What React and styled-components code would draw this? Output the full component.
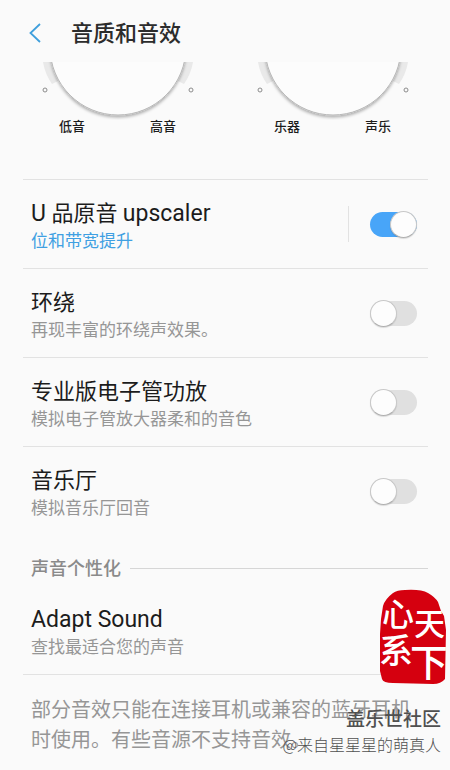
import React, { useState } from "react";
import styled, { createGlobalStyle } from "styled-components";

const GlobalStyle = createGlobalStyle`
* {
box-sizing: border-box;
}
body {
margin: 0;
background-color: #fafafa;
color: #1c1c1c;
font-family: Roboto, "Noto Sans CJK SC", sans-serif;
}
`

const Container = styled.div`
position: relative;
min-height: 100vh;
overflow: hidden;
`

const Header = styled.header`
display: flex;
align-items: center;
gap: 21px;
height: 62px;
padding: 4px 20px 0;
`

const BackButton = styled.button`
display: flex;
padding: 8px 9px;
background: none;
border: none;
cursor: pointer;
`

const Title = styled.h1`
margin: 0;
padding-top: 2px;
font-size: 22px;
line-height: 30px;
font-weight: 500;
color: #2c2c2c;
`

const Dials = styled.section`
display: flex;
padding: 0 10px 45px;
`

const DialBox = styled.div`
flex: 1;
display: flex;
flex-direction: column;
align-items: center;
`

const DialLabels = styled.div`
display: flex;
gap: 65px;
font-size: 13px;
line-height: 14px;
font-weight: 500;
`

const Content = styled.main`
margin: 0 22px 0 23px;
`

const List = styled.ul`
margin: 0;
padding: 0;
list-style: none;
border-top: ${(props) => (props.$topLine ? "1px solid #e2e2e2" : "none")};
`

const Row = styled.li`
position: relative;
display: flex;
align-items: center;
justify-content: space-between;
height: 89px;
padding: 5px 11px 0 8px;
border-bottom: ${(props) => (props.$last ? "none" : "1px solid #e2e2e2")};
`

const RowText = styled.label`
flex: 1;
display: flex;
flex-direction: column;
cursor: pointer;
`

const RowLink = styled.a`
flex: 1;
display: flex;
flex-direction: column;
color: inherit;
text-decoration: none;
`

const RowTitle = styled.span`
font-size: 22px;
line-height: 28px;
`

const Latin = styled.span`
font-size: 23px;
`

const RowDetail = styled.span`
font-size: 17px;
line-height: 26px;
color: ${(props) => (props.$active ? "#3fa0e2" : "#969696")};
`

const SwitchBox = styled.div`
display: flex;
align-items: center;
height: 36px;
margin-bottom: 5px;
padding-left: 21px;
border-left: 1px solid ${(props) => (props.$divided ? "#e2e2e2" : "transparent")};
`

const Switch = styled.input`
appearance: none;
display: flex;
align-items: center;
justify-content: ${(props) => (props.checked ? "flex-end" : "flex-start")};
width: 47px;
height: 25px;
margin: 0;
border-radius: 13px;
background-color: ${(props) => (props.checked ? "#48a5f8" : "#e0e0e0")};
cursor: pointer;

&::before {
content: "";
flex: none;
box-sizing: border-box;
width: 27px;
height: 27px;
border: 1px solid #c8c8c8;
border-bottom-color: #b0b0b0;
border-radius: 50%;
background-color: #fdfdfd;
box-shadow: 0 1px 1px rgba(0, 0, 0, 0.12);
}
`

const SectionTitle = styled.h2`
display: flex;
align-items: center;
gap: 9px;
margin: 0;
padding: 18px 0 2px 8px;
font-size: 18px;
line-height: 30px;
font-weight: 500;
color: #8a8a8a;

&::after {
content: "";
flex: 1;
height: 1px;
margin-bottom: 2px;
background-color: #d6d6d6;
}
`

const Seal = styled.svg`
position: absolute;
top: 3px;
right: -19px;
`

const Footer = styled.footer`
position: relative;
padding: 20px 0 15px 31px;
`

const Note = styled.p`
margin: 0;
padding-right: 36px;
font-size: 20px;
line-height: 30px;
color: #969696;
`

const Watermark = styled.div`
position: absolute;
right: 9px;
bottom: 13px;
display: flex;
flex-direction: column;
align-items: flex-end;
font-family: "Noto Sans CJK SC", sans-serif;
line-height: 26px;
color: #505050;
`

const Community = styled.span`
font-size: 19px;
font-weight: 500;
`

const Author = styled.span`
font-size: 16px;
font-weight: 300;
`

const effects = [
  { id: "upscaler", title: <><Latin>U</Latin> 品原音 <Latin>upscaler</Latin></>, detail: "位和带宽提升", divided: true },
  { id: "surround", title: "环绕", detail: "再现丰富的环绕声效果。" },
  { id: "tube", title: "专业版电子管功放", detail: "模拟电子管放大器柔和的音色" },
  { id: "hall", title: "音乐厅", detail: "模拟音乐厅回音" },
]

function Dial({ left, right }) {
  return (
    <DialBox>
      <svg width="160" height="58" viewBox="0 0 160 58" aria-hidden="true">
        <defs>
          <filter id="dialShadow" x="-10%" y="-10%" width="120%" height="120%">
            <feDropShadow dx="0" dy="2" stdDeviation="1.5" floodColor="#000" floodOpacity="0.3" />
          </filter>
        </defs>
        <path d="M5 0Q7 12 14 22L20 19L30 0ZM155 0Q153 12 146 22L140 19L130 0Z" fill="#e9e9e9" />
        <circle cx="80" cy="-15" r="68" fill="#fcfcfc" stroke="#b8b8b8" filter="url(#dialShadow)" />
        <circle cx="7" cy="28" r="2" fill="none" stroke="#8c8c8c" />
        <circle cx="153" cy="28" r="2" fill="none" stroke="#8c8c8c" />
      </svg>
      <DialLabels>
        <span>{left}</span>
        <span>{right}</span>
      </DialLabels>
    </DialBox>
  )
}

function SealStamp() {
  return (
    <Seal width="68" height="96" viewBox="0 0 68 96">
      <path
        d="M14 4Q18 1 26 1Q42 0 49 4Q56 8 59 13L62 22L65 27L67 41L66 90Q62 95 54 95L14 94Q4 94 3 90L1 82L1 45L2 30L4 17Q6 10 14 4Z"
        fill="#d5000f"
      />
      <g fill="#fff" fontWeight="500">
        <text x="3" y="37" fontSize="32">心</text>
        <text x="0" y="74" fontSize="34">系</text>
        <text x="35" y="46" fontSize="31">天</text>
        <text x="31" y="87" fontSize="38">下</text>
      </g>
    </Seal>
  )
}

function App() {
  const [enabled, setEnabled] = useState({ upscaler: true })

  const toggle = (id) => {
    setEnabled({ ...enabled, [id]: !enabled[id] })
  }

  return (
    <Container>
      <GlobalStyle />
      <Header>
        <BackButton aria-label="返回">
          <svg width="12" height="20" viewBox="0 0 12 20" fill="none" stroke="#3f9fdc" strokeWidth="1.8">
            <path d="M11 1L1.500 10L11 19" />
          </svg>
        </BackButton>
        <Title>音质和音效</Title>
      </Header>
      <Dials>
        <Dial left="低音" right="高音" />
        <Dial left="乐器" right="声乐" />
      </Dials>
      <Content>
        <List $topLine>
          {effects.map((item, index) => (
            <Row key={item.id} $last={index === effects.length - 1}>
              <RowText htmlFor={item.id}>
                <RowTitle>{item.title}</RowTitle>
                <RowDetail $active={!!enabled[item.id]}>{item.detail}</RowDetail>
              </RowText>
              <SwitchBox $divided={item.divided}>
                <Switch
                  type="checkbox"
                  role="switch"
                  id={item.id}
                  checked={!!enabled[item.id]}
                  onChange={() => toggle(item.id)}
                />
              </SwitchBox>
            </Row>
          ))}
        </List>
        <SectionTitle>声音个性化</SectionTitle>
        <List>
          <Row>
            <RowLink href="#adapt-sound">
              <RowTitle><Latin>Adapt Sound</Latin></RowTitle>
              <RowDetail>查找最适合您的声音</RowDetail>
            </RowLink>
            <SealStamp />
          </Row>
        </List>
      </Content>
      <Footer>
        <Note>部分音效只能在连接耳机或兼容的蓝牙耳机时使用。有些音源不支持音效。</Note>
        <Watermark>
          <Community>盖乐世社区</Community>
          <Author>@来自星星星的萌真人</Author>
        </Watermark>
      </Footer>
    </Container>
  );
}

export default App;
